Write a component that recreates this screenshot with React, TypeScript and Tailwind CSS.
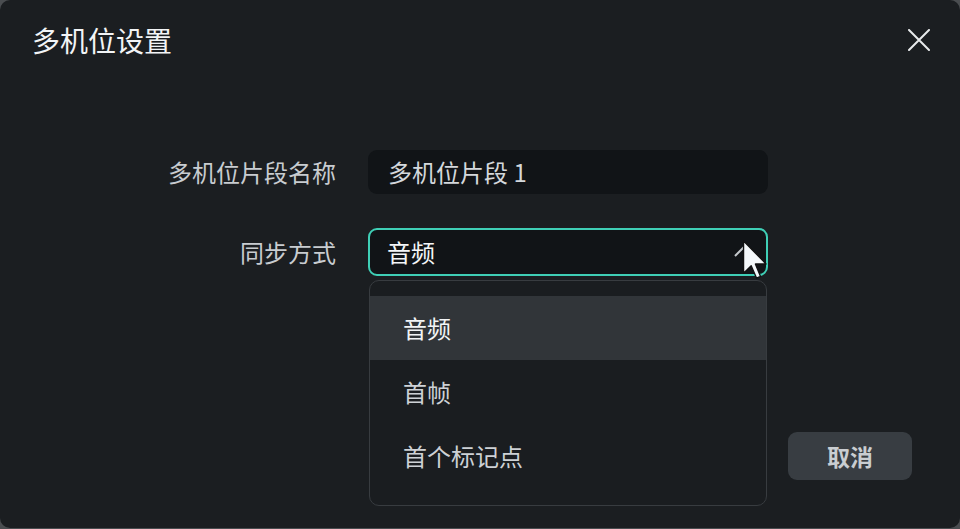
import React from "react";

const cjk = { fontFamily: '"Noto Sans CJK SC", "Noto Sans", sans-serif' };

function CloseIcon() {
  return (
    <svg width="22" height="22" viewBox="0 0 22 22" fill="none">
      <path d="M1 1 L21 21 M21 1 L1 21" stroke="#e8eaec" strokeWidth="2" strokeLinecap="round" />
    </svg>
  );
}

function Cursor() {
  return (
    <svg
      className="pointer-events-none absolute left-[374px] top-[12px]"
      width="26"
      height="40"
      viewBox="0 0 13 21"
    >
      <path
        d="M0.5 0.5 L0.5 17.5 L4.5 13.5 L7.3 20 L9.4 19.1 L6.7 12.6 L12.3 12.6 Z"
        fill="#f4f8fa"
        stroke="#111"
        strokeWidth="0.7"
        strokeLinejoin="round"
      />
    </svg>
  );
}

const options = ["音频", "首帧", "首个标记点"];

export default function App() {
  return (
    <div className="h-[529px] w-[960px] bg-[#4a4d50]" style={cjk}>
      <div className="flex h-[528px] w-full flex-col rounded-[10px] bg-[#1b1e21]">
        {/* Header */}
        <div className="flex items-center justify-between pl-8 pr-[28px] pt-[21px]">
          <h1 className="text-[28px] leading-[38px] text-[#f2f4f6]">多机位设置</h1>
          <button className="flex h-[38px] w-[26px] items-center justify-center">
            <CloseIcon />
          </button>
        </div>

        {/* Form */}
        <div className="mt-[91px] flex flex-col gap-[34px]">
          <div className="flex items-center gap-8">
            <label className="w-[336px] text-right text-[24px] text-[#c8ccd0]">多机位片段名称</label>
            <div className="flex h-[44px] w-[400px] items-center rounded-[9px] bg-[#111417] px-5 text-[24px] text-[#d4d8dc]">
              多机位片段 1
            </div>
          </div>

          <div className="flex items-center gap-8">
            <label className="w-[336px] text-right text-[24px] text-[#c8ccd0]">同步方式</label>
            <div className="relative w-[400px]">
              <div className="flex h-[48px] items-center justify-between rounded-[9px] border-2 border-[#3fcfb6] bg-[#111417] pl-[17px] pr-[14px] text-[24px] text-[#f4f6f8]">
                <span>音频</span>
                <svg width="18" height="12" viewBox="0 0 18 12" fill="none">
                  <path d="M1 10 L9 2 L17 10" stroke="#c4c8cc" strokeWidth="2" />
                </svg>
              </div>
              <Cursor />

              {/* Dropdown menu */}
              <div className="absolute left-px right-px top-[52px] z-10 h-[226px] rounded-[10px] border-[1.5px] border-[#383c40] bg-[#1a1d20] py-[15px]">
                {options.map((o, i) => (
                  <div
                    key={o}
                    className={
                      i === 0
                        ? "flex h-[64px] items-center bg-[#313539] pl-[33px] text-[24px] text-[#f2f4f6]"
                        : "flex h-[64px] items-center pl-[33px] text-[24px] text-[#cdd1d5]"
                    }
                  >
                    {o}
                  </div>
                ))}
              </div>
            </div>
          </div>
        </div>

        {/* Footer */}
        <div className="mt-auto flex justify-end pb-[48px] pr-12">
          <button className="h-[48px] w-[124px] rounded-[9px] bg-[#383d42] text-[23px] font-bold text-[#c9cdd1]">
            取消
          </button>
        </div>
      </div>
    </div>
  );
}
